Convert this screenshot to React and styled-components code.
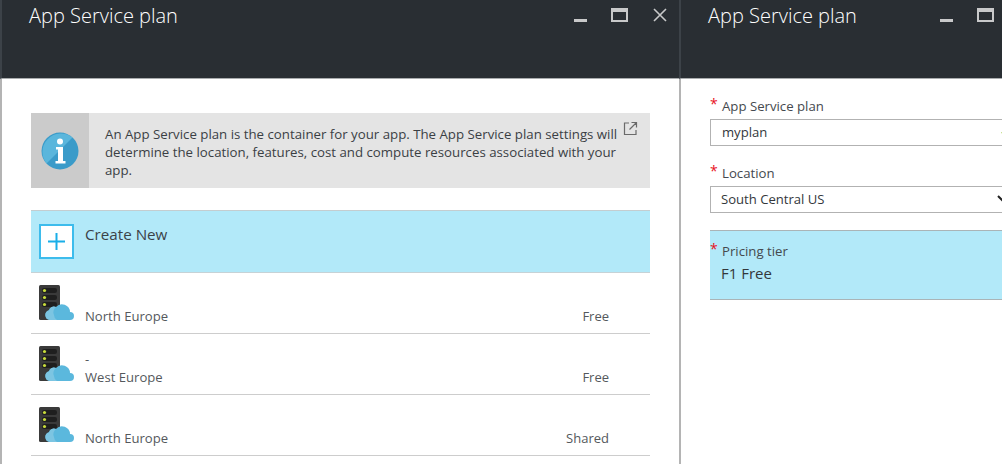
import React from "react";
import styled, { createGlobalStyle } from "styled-components";

const GlobalStyle = createGlobalStyle`
  html, body {
    margin: 0;
    padding: 0;
    height: 100%;
    overflow: hidden;
    background: #fff;
    font-family: "Open Sans", "Noto Sans", sans-serif;
    color: #3b3f44;
  }
`;

const Page = styled.div`
  display: flex;
  width: 1002px;
  height: 464px;
  overflow: hidden;
`;

const Blade = styled.section`
  flex: 0 0 ${(props) => props.width}px;
  box-sizing: border-box;
  display: flex;
  flex-direction: column;
  border-left: 2px solid #b4b4b4;
`;

const Header = styled.header`
  flex: 0 0 79px;
  box-sizing: border-box;
  margin-left: -2px;
  display: flex;
  justify-content: space-between;
  background: #292e33;
  border-left: 2px solid #3c4248;
  border-bottom: 1px solid #a9acae;
`;

const Title = styled.h1`
  margin: 0;
  padding: 2px 0 0 ${(props) => props.inset}px;
  font-size: 20px;
  font-weight: 300;
  line-height: 28px;
  color: #fff;
`;

const Controls = styled.div`
  display: flex;
  align-items: flex-start;
  padding: 7px 10px 0 0;
  gap: 22px;
`;

const ControlIcon = styled.svg`
  display: block;
  width: 18px;
  height: 16px;
`;

const MinimizeIcon = styled(ControlIcon)`
  margin-right: -1px;
`;

const Body = styled.div`
  flex: 1;
  min-height: 0;
`;

const ListBody = styled(Body)`
  padding: 34px 29px 0;
`;

const FormBody = styled(Body)`
  padding: 18px 0 0 29px;
`;

const InfoBox = styled.div`
  position: relative;
  display: flex;
  height: 75px;
  background: #e4e4e4;
`;

const InfoIconCell = styled.div`
  flex: 0 0 58px;
  display: flex;
  align-items: center;
  justify-content: center;
  background: #cbcbcb;
`;

const InfoText = styled.p`
  margin: 0;
  padding: 12px 20px 0 16px;
  font-size: 13.25px;
  line-height: 18px;
  color: #3b3f44;
`;

const ExternalLink = styled.svg`
  position: absolute;
  top: 8px;
  right: 12px;
  width: 15px;
  height: 15px;
`;

const CreateRow = styled.div`
  display: flex;
  box-sizing: border-box;
  height: 63px;
  margin-top: 22px;
  padding: 13px 8px 0;
  gap: 11px;
  background: #b2e9f9;
  border-top: 1px solid #c4cdd0;
  border-bottom: 1px solid #c6d2d6;
`;

const PlusBox = styled.div`
  box-sizing: border-box;
  width: 35px;
  height: 35px;
  display: flex;
  align-items: center;
  justify-content: center;
  background: #fff;
  border: 2px solid #3dbcec;
`;

const CreateLabel = styled.span`
  font-size: 15.2px;
  line-height: 21px;
  color: #3b4248;
`;

const PlanRow = styled.div`
  display: flex;
  box-sizing: border-box;
  height: 61px;
  padding: 12px 41px 8px 8px;
  gap: 11px;
  border-bottom: 1px solid #cdcdcd;
`;

const PlanText = styled.div`
  flex: 1;
  display: flex;
  flex-direction: column;
  justify-content: flex-end;
  font-size: 13.1px;
  line-height: 18px;
  color: #54585c;
`;

const PlanPrice = styled.div`
  align-self: flex-end;
  font-size: 13px;
  line-height: 18px;
  color: #54585c;
`;

const Field = styled.div`
  margin-bottom: ${(props) => props.gap}px;
`;

const Label = styled.label`
  display: flex;
  gap: 5px;
  font-size: 13.2px;
  line-height: 18px;
  color: #45494e;
`;

const Star = styled.span`
  width: 7px;
  color: #e81123;
  font-size: 14px;
  line-height: 14px;
`;

const InputBox = styled.div`
  box-sizing: border-box;
  display: flex;
  align-items: center;
  justify-content: space-between;
  width: 306px;
  height: 27px;
  margin-top: 4px;
  padding: 0 ${(props) => props.$right}px 2px ${(props) => props.$left}px;
  border: 1px solid #b2b2b2;
  background: #fff;
  font-size: 13.1px;
  color: #33373b;
`;

const TierRow = styled.div`
  box-sizing: border-box;
  height: 70px;
  padding: 11px 0 0;
  background: #b2e9f9;
  border-top: 1px solid #aab4b7;
  border-bottom: 1px solid #aab4b7;
`;

const TierValue = styled.div`
  margin-top: 1px;
  padding-left: 11px;
  font-size: 15px;
  line-height: 24px;
  color: #33373b;
`;

const Minimize = () => (
  <MinimizeIcon viewBox="0 0 18 16">
    <rect x="2" y="12" width="13" height="3" fill="#c8c9ca" />
  </MinimizeIcon>
);

const Maximize = () => (
  <ControlIcon viewBox="0 0 18 16">
    <rect x="1" y="2" width="15" height="12" fill="none" stroke="#c8c9ca" strokeWidth="2" />
    <rect x="1" y="2" width="15" height="3" fill="#c8c9ca" />
  </ControlIcon>
);

const Close = () => (
  <ControlIcon viewBox="0 0 18 16">
    <path d="M3 2l12 12M15 2L3 14" fill="none" stroke="#c8c9ca" strokeWidth="1.6" />
  </ControlIcon>
);

const InfoIcon = () => (
  <svg width="38" height="38" viewBox="0 0 38 38">
    <circle cx="19" cy="19" r="18.500" fill="#3a9bc9" />
    <path d="M31.500 5.500A18.500 18.500 0 0 0 5.500 31.500z" fill="#5ab6dc" />
    <circle cx="19" cy="9.500" r="3" fill="#fff" />
    <path d="M15 15h7v14h2.500v2.500h-10V29H17V17.500h-2z" fill="#fff" />
  </svg>
);

const ServerCloud = () => (
  <svg width="35" height="35" viewBox="0 0 35 35">
    <rect x="0" y="0" width="21" height="35" rx="1.500" fill="#3a3a3a" />
    <rect x="3" y="3" width="15" height="5" rx="2" fill="#1f1f1f" />
    <rect x="3" y="10" width="15" height="5" rx="2" fill="#1f1f1f" />
    <rect x="3" y="17" width="15" height="5" rx="2" fill="#1f1f1f" />
    <circle cx="5.500" cy="5.500" r="1.600" fill="#c8dc3c" />
    <circle cx="5.500" cy="12.500" r="1.600" fill="#c8dc3c" />
    <circle cx="5.500" cy="19.500" r="1.600" fill="#c8dc3c" />
    <path d="M11 35a5 5 0 0 1-1-9.800A5 5 0 0 1 17 22a8 8 0 0 1 14 5 4 4 0 0 1 0 8z" fill="#5bb8dd" />
    <path d="M11 35a5 5 0 0 1-1-9.800A5 5 0 0 1 17 22a7 7 0 0 0-2 8 6 6 0 0 0 3 5z" fill="#7cc5e2" />
  </svg>
);

const plans = [
  { lines: ["North Europe"], price: "Free" },
  { lines: ["-", "West Europe"], price: "Free" },
  { lines: ["North Europe"], price: "Shared" },
];

const App = () => (
  <Page>
    <GlobalStyle />
    <Blade width={679}>
      <Header>
        <Title inset={27}>App Service plan</Title>
        <Controls>
          <Minimize />
          <Maximize />
          <Close />
        </Controls>
      </Header>
      <ListBody>
        <InfoBox>
          <InfoIconCell>
            <InfoIcon />
          </InfoIconCell>
          <InfoText>
            An App Service plan is the container for your app. The App Service plan settings will
            determine the location, features, cost and compute resources associated with your
            app.
          </InfoText>
          <ExternalLink viewBox="0 0 15 15">
            <path d="M6 2H1.500v11.500H13V9M8.500 1.500H13.500V6.500M13.500 1.500L6.500 8.500" fill="none" stroke="#6a6a6a" strokeWidth="1.2" />
          </ExternalLink>
        </InfoBox>
        <CreateRow>
          <PlusBox>
            <svg width="19" height="19" viewBox="0 0 19 19">
              <path d="M9.500 1v17M1 9.500h17" stroke="#19aee8" strokeWidth="2" />
            </svg>
          </PlusBox>
          <CreateLabel>Create New</CreateLabel>
        </CreateRow>
        {plans.map((plan, i) => (
          <PlanRow key={i}>
            <ServerCloud />
            <PlanText>
              {plan.lines.map((line) => (
                <div key={line}>{line}</div>
              ))}
            </PlanText>
            <PlanPrice>{plan.price}</PlanPrice>
          </PlanRow>
        ))}
      </ListBody>
    </Blade>
    <Blade width={366}>
      <Header>
        <Title inset={27}>App Service plan</Title>
        <Controls>
          <Minimize />
          <Maximize />
          <Close />
        </Controls>
      </Header>
      <FormBody>
        <Field gap={18}>
          <Label>
            <Star>*</Star>App Service plan
          </Label>
          <InputBox $left={11} $right={2}>
            myplan
            <svg width="12" height="10" viewBox="0 0 12 10">
              <path d="M1 5l3.500 3.500L11 1" fill="none" stroke="#7fba00" strokeWidth="2" />
            </svg>
          </InputBox>
        </Field>
        <Field gap={17}>
          <Label>
            <Star>*</Star>Location
          </Label>
          <InputBox $left={10} $right={6}>
            South Central US
            <svg width="12" height="8" viewBox="0 0 12 8">
              <path d="M1 1l5 5 5-5" fill="none" stroke="#222" strokeWidth="2" />
            </svg>
          </InputBox>
        </Field>
        <TierRow>
          <Label>
            <Star>*</Star>Pricing tier
          </Label>
          <TierValue>F1 Free</TierValue>
        </TierRow>
      </FormBody>
    </Blade>
  </Page>
);

export default App;
